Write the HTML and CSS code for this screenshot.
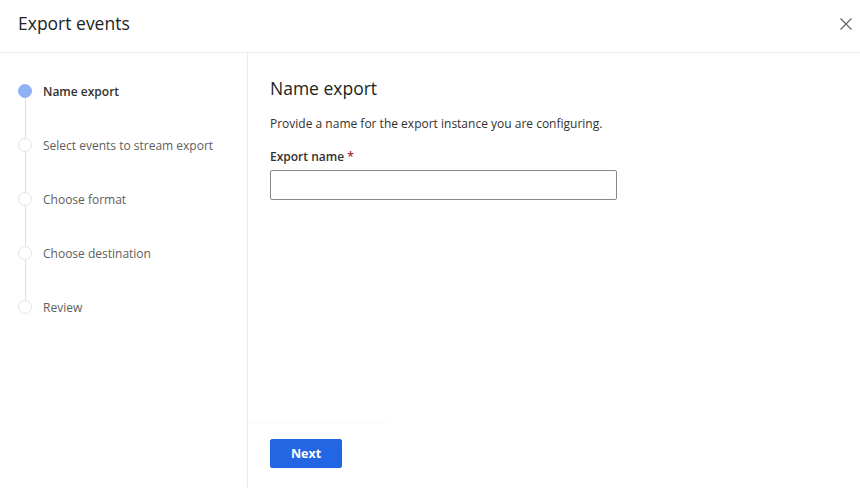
FILE: index.html
```html
<!DOCTYPE html>
<html>
<head>
<meta charset="utf-8">
<link rel="stylesheet" href="styles.css">
</head>
<body>
<div class="dialog">
  <header class="header">
    <h1 class="title">Export events</h1>
    <button class="close" aria-label="Close">
      <svg width="12" height="12" viewBox="0 0 12 12"><path d="M0.5 0.5L11.5 11.5M11.5 0.5L0.5 11.5" stroke="#605e5c" stroke-width="1.1" fill="none"/></svg>
    </button>
  </header>
  <div class="body">
    <nav class="steps">
      <div class="step active"><span class="dot"></span><span class="label">Name export</span></div>
      <div class="conn"></div>
      <div class="step"><span class="dot"></span><span class="label">Select events to stream export</span></div>
      <div class="conn"></div>
      <div class="step"><span class="dot"></span><span class="label">Choose format</span></div>
      <div class="conn"></div>
      <div class="step"><span class="dot"></span><span class="label">Choose destination</span></div>
      <div class="conn"></div>
      <div class="step"><span class="dot"></span><span class="label">Review</span></div>
    </nav>
    <main class="main">
      <div class="content">
        <h2 class="heading">Name export</h2>
        <p class="desc">Provide a name for the export instance you are configuring.</p>
        <label class="field-label">Export name <span class="req">*</span></label>
        <input class="input" type="text">
      </div>
      <div class="footer">
        <div class="footer-line"></div>
        <div class="actions"><button class="next">Next</button></div>
      </div>
    </main>
  </div>
</div>
</body>
</html>
```
FILE: styles.css
```css
* { box-sizing: border-box; }
html, body { margin: 0; padding: 0; background: #fff; }
body { font-family: "Open Sans", "Noto Sans", sans-serif; color: #323130; }
.dialog { width: 860px; height: 488px; display: flex; flex-direction: column; }
.header {
  height: 53px; border-bottom: 1px solid #edebe9;
  display: flex; align-items: center; justify-content: space-between;
  padding: 0 2px 0 18px;
}
.title { margin: 0; font-size: 17.5px; font-weight: 400; color: #201f1e; position: relative; top: -3px; }
.close { background: none; border: 0; padding: 0; width: 24px; height: 24px; display: flex; align-items: center; justify-content: center; position: relative; top: -2px; }
.body { flex: 1; display: flex; }
.steps { width: 248px; border-right: 1px solid #edebe9; padding: 31px 0 0 18px; display: flex; flex-direction: column; }
.step { display: flex; align-items: center; height: 14px; gap: 11px; }
.dot { width: 14px; height: 14px; border-radius: 50%; border: 1.5px solid #e6e4e2; background: #fff; flex: none; }
.step.active .dot { background: #8eb1f7; border-color: #8eb1f7; }
.label { font-size: 12px; color: #605e5c; white-space: nowrap; }
.step.active .label { color: #323130; font-weight: 600; }
.conn { width: 1px; height: 40px; background: #e1dfdd; margin-left: 6.5px; }
.main { flex: 1; display: flex; flex-direction: column; justify-content: space-between; }
.content { padding: 23px 0 0 22px; }
.heading { margin: 0; font-size: 17.5px; font-weight: 500; color: #201f1e; line-height: 24px; }
.desc { margin: 15px 0 0; font-size: 12px; color: #323130; line-height: 18px; }
.field-label { display: block; margin-top: 15px; font-size: 12px; font-weight: 600; color: #323130; line-height: 18px; }
.req { color: #a4262c; }
.input { display: block; margin-top: 4px; width: 347px; height: 30px; border: 1px solid #8a8886; border-radius: 2px; }
.footer { padding: 0 0 20px 0; }
.footer-line { width: 142px; height: 1px; background: #f9f9f9; margin: 0 0 16px 0; }
.actions { padding-left: 22px; }
.next { width: 72px; height: 29px; background: #2266e3; color: #fff; border: 1px solid #2266e3; border-radius: 2px; font-family: inherit; font-size: 12.5px; font-weight: 700; padding: 0; }
```
